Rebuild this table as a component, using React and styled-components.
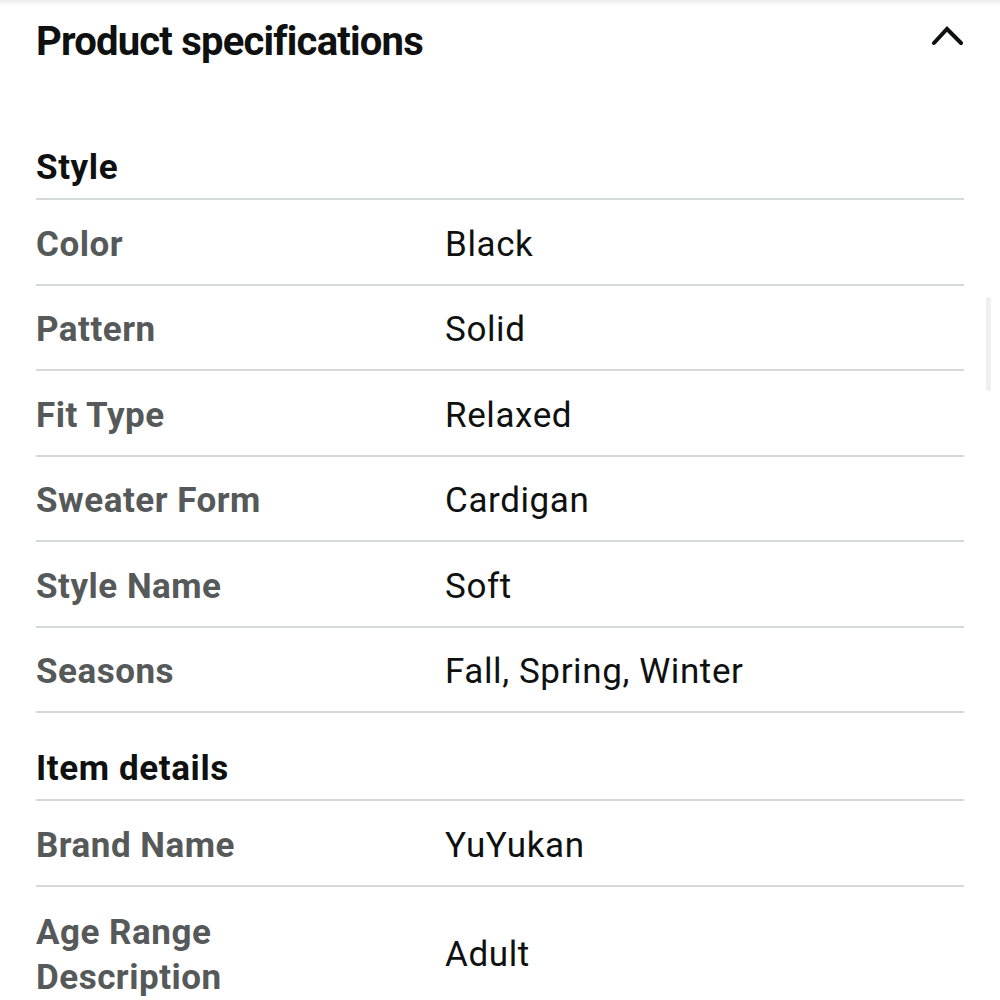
import React from "react";
import styled, { createGlobalStyle } from "styled-components";

const Global = createGlobalStyle`
  html, body { margin: 0; padding: 0; background: #fff; }
  body { font-family: Roboto, "Liberation Sans", Arial, sans-serif; color: #0f1111; }
`;

const Page = styled.div`
  position: relative;
  width: 1000px;
  height: 1000px;
  overflow: hidden;
  background: linear-gradient(#ececec 0px, #fafafa 4px, #fff 7px);
`;

const Content = styled.div`
  padding: 0 36px;
`;

const Header = styled.div`
  height: 82px;
  display: flex;
  align-items: center;
  justify-content: space-between;
`;

const Title = styled.h1`
  margin: 0;
  font-size: 40px;
  font-weight: 700;
  letter-spacing: -0.8px;
  color: #0f1111;
`;

const Caret = styled.svg`
  width: 32px;
  height: 20px;
  margin-top: -10px;
`;

const SectionHeading = styled.div`
  height: ${(p) => p.$h}px;
  box-sizing: border-box;
  display: flex;
  align-items: flex-end;
  padding-bottom: 10px;
  border-bottom: 2px solid #d5d9d9;
  font-size: 35px;
  font-weight: 700;
  color: #0f1111;
  letter-spacing: 0.6px;
`;

const Row = styled.div`
  display: grid;
  grid-template-columns: 409px 1fr;
  align-items: center;
  min-height: 85.5px;
  box-sizing: border-box;
  border-bottom: 2px solid #d5d9d9;
  padding: ${(p) => (p.$tall ? "23px 0 10px" : "5px 0 0")};
`;

const Label = styled.div`
  font-size: 35px;
  font-weight: 700;
  color: #565959;
  line-height: 45px;
  letter-spacing: 0.5px;
`;

const Value = styled.div`
  font-size: 35px;
  font-weight: 400;
  color: #0f1111;
  line-height: 45px;
  letter-spacing: 0.6px;
`;

const Scrollbar = styled.div`
  position: absolute;
  left: 986px;
  top: 297px;
  width: 5px;
  height: 94px;
  border-radius: 3px;
  background: #efefef;
`;

const style = [
  ["Color", "Black"],
  ["Pattern", "Solid"],
  ["Fit Type", "Relaxed"],
  ["Sweater Form", "Cardigan"],
  ["Style Name", "Soft"],
  ["Seasons", "Fall, Spring, Winter"],
];

const item = [
  ["Brand Name", "YuYukan"],
  ["Age Range\nDescription", "Adult", true],
];

export default function App() {
  return (
    <Page>
      <Global />
      <Content>
        <Header>
          <Title>Product specifications</Title>
          <Caret viewBox="0 0 32 20">
            <polyline
              points="2,17 15,3 29,17"
              fill="none"
              stroke="#0f1111"
              strokeWidth="4"
              strokeLinecap="round"
              strokeLinejoin="miter"
            />
          </Caret>
        </Header>
        <SectionHeading $h={118}>Style</SectionHeading>
        {style.map(([l, v]) => (
          <Row key={l}>
            <Label>{l}</Label>
            <Value>{v}</Value>
          </Row>
        ))}
        <SectionHeading $h={88}>Item details</SectionHeading>
        {item.map(([l, v, tall]) => (
          <Row key={l} $tall={tall}>
            <Label>
              {l.split("\n").map((s, i) => (
                <div key={i}>{s}</div>
              ))}
            </Label>
            <Value>{v}</Value>
          </Row>
        ))}
      </Content>
      <Scrollbar />
    </Page>
  );
}
